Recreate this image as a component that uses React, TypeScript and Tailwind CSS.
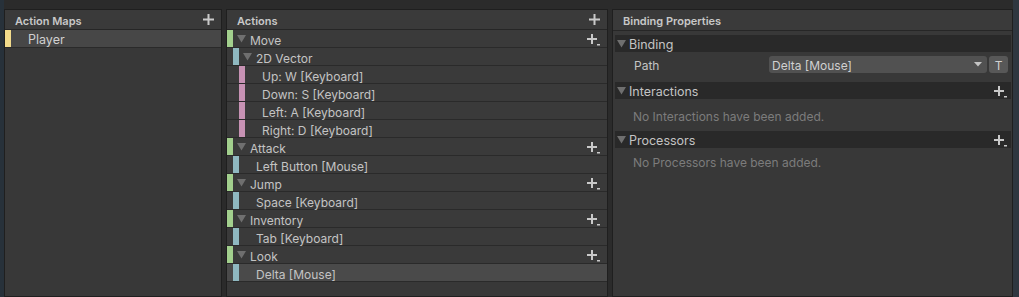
import React from "react";

const C = {
  yellow: "#f2db8b",
  green: "#a2cf8d",
  teal: "#8fb8c0",
  pink: "#c792b4",
};

function Plus() {
  return (
    <svg width="11" height="11" viewBox="0 0 11 11" className="shrink-0">
      <rect x="4.5" y="0" width="2" height="11" fill="#c9c9c9" />
      <rect x="0" y="4.5" width="11" height="2" fill="#c9c9c9" />
    </svg>
  );
}

function PlusDrop() {
  return (
    <svg width="14" height="12" viewBox="0 0 14 12" className="shrink-0">
      <rect x="4" y="0" width="2" height="10" fill="#c9c9c9" />
      <rect x="0" y="4" width="10" height="2" fill="#c9c9c9" />
      <rect x="10" y="10" width="3" height="1.5" fill="#c9c9c9" />
    </svg>
  );
}

function Tri() {
  return (
    <svg width="9" height="8" viewBox="0 0 9 8" className="shrink-0">
      <polygon points="0,0 9,0 4.5,7.5" fill="#6f6f6f" />
    </svg>
  );
}

type Row = {
  kind: "action" | "composite" | "part" | "binding";
  label: string;
  selected?: boolean;
};

const rows: Row[] = [
  { kind: "action", label: "Move" },
  { kind: "composite", label: "2D Vector" },
  { kind: "part", label: "Up: W [Keyboard]" },
  { kind: "part", label: "Down: S [Keyboard]" },
  { kind: "part", label: "Left: A [Keyboard]" },
  { kind: "part", label: "Right: D [Keyboard]" },
  { kind: "action", label: "Attack" },
  { kind: "binding", label: "Left Button [Mouse]" },
  { kind: "action", label: "Jump" },
  { kind: "binding", label: "Space [Keyboard]" },
  { kind: "action", label: "Inventory" },
  { kind: "binding", label: "Tab [Keyboard]" },
  { kind: "action", label: "Look" },
  { kind: "binding", label: "Delta [Mouse]", selected: true },
];

function ActionRow({ r }: { r: Row }) {
  const bg = r.selected ? "bg-[#4a4a4a]" : "bg-[#3a3a3a]";
  if (r.kind === "action") {
    return (
      <div className={`flex items-center h-[18px] border-b border-[#2a2a2a] ${bg}`}>
        <div className="w-[6px] self-stretch" style={{ background: C.green }} />
        <div className="ml-[4px] mt-[1px]">
          <Tri />
        </div>
        <span className="ml-[4px] mt-[4px] flex-1">{r.label}</span>
        <div className="mr-[6px] mt-[2px]">
          <PlusDrop />
        </div>
      </div>
    );
  }
  if (r.kind === "composite") {
    return (
      <div className={`flex items-center h-[18px] border-b border-[#2a2a2a] ${bg}`}>
        <div className="w-[6px]" />
        <div className="w-[6px] self-stretch" style={{ background: C.teal }} />
        <div className="ml-[4px] mt-[1px]">
          <Tri />
        </div>
        <span className="ml-[4px] mt-[4px]">{r.label}</span>
      </div>
    );
  }
  if (r.kind === "part") {
    return (
      <div className={`flex items-center h-[18px] border-b border-[#2a2a2a] ${bg}`}>
        <div className="w-[12px]" />
        <div className="w-[6px] self-stretch" style={{ background: C.pink }} />
        <span className="ml-[17px] mt-[4px]">{r.label}</span>
      </div>
    );
  }
  return (
    <div className={`flex items-center h-[18px] border-b border-[#2a2a2a] ${bg}`}>
      <div className="w-[6px]" />
      <div className="w-[6px] self-stretch" style={{ background: C.teal }} />
      <span className="ml-[17px] mt-[4px]">{r.label}</span>
    </div>
  );
}

function SectionHeader({ label, plus }: { label: string; plus?: boolean }) {
  return (
    <div className="flex items-center h-[17px] bg-[#292929]">
      <div className="ml-[2px]">
        <Tri />
      </div>
      <span className="ml-[3px] mt-[3px] flex-1 text-[12.5px]">{label}</span>
      {plus && (
        <div className="mr-[3px] mt-[2px]">
          <PlusDrop />
        </div>
      )}
    </div>
  );
}

export default function App() {
  return (
    <div
      className="w-[1019px] h-[297px] bg-[#2b2b2b] flex pt-[9px] overflow-hidden text-[12px] text-[#c4c4c4] leading-none"
      style={{ fontFamily: "Inter, 'Noto Sans', sans-serif" }}
    >
      <div className="w-[4px] bg-[#27313a] -mt-[9px]" />
      {/* Action Maps */}
      <div className="w-[218px] border border-[#1f1f1f] bg-[#383838] flex flex-col">
        <div className="h-[20px] shrink-0 flex items-center border-b border-[#262626] bg-[#3a3a3a]">
          <span className="ml-[10px] mt-[3px] flex-1 font-semibold text-[11px] text-[#c8c8c8]">Action Maps</span>
          <div className="mr-[7px]">
            <Plus />
          </div>
        </div>
        <div className="flex items-center h-[18px] shrink-0 border-b border-[#2a2a2a] bg-[#474747]">
          <div className="w-[6px] self-stretch" style={{ background: C.yellow }} />
          <span className="ml-[17px] mt-[4px] text-[12.5px] text-[#d0d0d0]">Player</span>
        </div>
      </div>
      <div className="w-[4px]" />
      {/* Actions */}
      <div className="w-[382px] border border-[#1f1f1f] bg-[#383838] flex flex-col">
        <div className="h-[20px] shrink-0 flex items-center border-b border-[#262626] bg-[#3a3a3a]">
          <span className="ml-[10px] mt-[3px] flex-1 font-semibold text-[11px] text-[#c8c8c8]">Actions</span>
          <div className="mr-[7px]">
            <Plus />
          </div>
        </div>
        {rows.map((r, i) => (
          <ActionRow key={i} r={r} />
        ))}
      </div>
      <div className="w-[4px]" />
      {/* Binding Properties */}
      <div className="w-[401px] border border-[#1f1f1f] bg-[#383838] flex flex-col">
        <div className="h-[21px] shrink-0 flex items-center border-b border-[#262626] bg-[#3a3a3a]">
          <span className="ml-[10px] mt-[3px] font-semibold text-[11px] text-[#c8c8c8]">Binding Properties</span>
        </div>
        <div className="flex flex-col pl-[2px] pr-[1px] pt-[4px]">
          <SectionHeader label="Binding" />
          <div className="flex items-center h-[17px] mt-[4px]">
            <span className="ml-[19px] mt-[3px] w-[135px]">Path</span>
            <div className="w-[218px] h-[17px] rounded-[3px] bg-[#515151] flex items-center pl-[3px] pr-[5px]">
              <span className="flex-1 mt-[3px] text-[#d0d0d0]">Delta [Mouse]</span>
              <svg width="8" height="5" viewBox="0 0 8 5">
                <polygon points="0,0 8,0 4,4.5" fill="#c4c4c4" />
              </svg>
            </div>
            <div className="ml-[2px] w-[19px] h-[17px] rounded-[3px] bg-[#585858] flex items-center justify-center text-[#d0d0d0]">
              <span className="mt-[3px]">T</span>
            </div>
          </div>
          <div className="mt-[9px]">
            <SectionHeader label="Interactions" plus />
          </div>
          <div className="h-[32px] flex items-center">
            <span className="ml-[18px] mt-[3px] text-[#7c7c7c]">No Interactions have been added.</span>
          </div>
          <SectionHeader label="Processors" plus />
          <div className="h-[26px] flex items-center">
            <span className="ml-[18px] mt-[3px] text-[#7c7c7c]">No Processors have been added.</span>
          </div>
        </div>
      </div>
      <div className="w-[6px] bg-[#2f3740] -mt-[9px]" />
    </div>
  );
}
